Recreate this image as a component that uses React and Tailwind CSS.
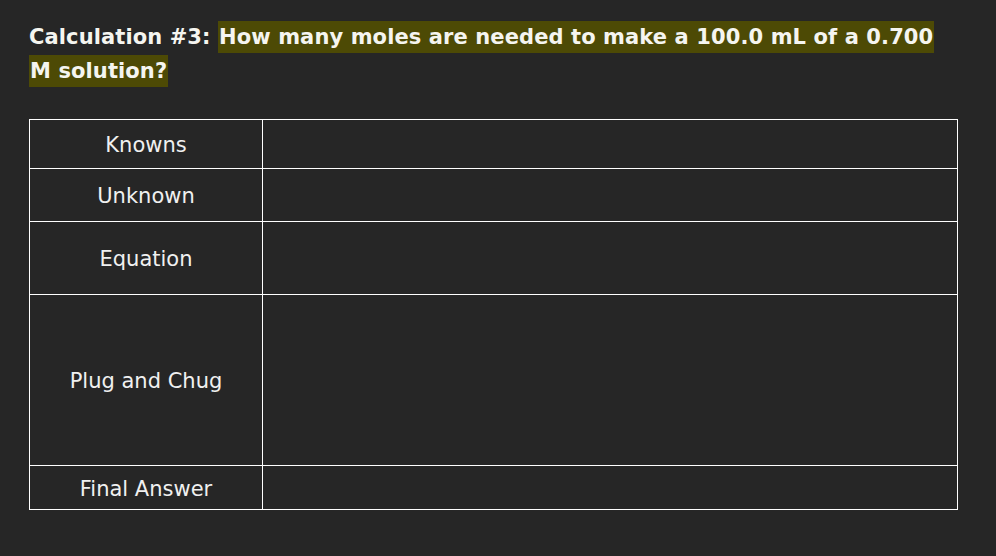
export default function App() {
  const rows = [
    { label: 'Knowns', h: 'h-[49px]' },
    { label: 'Unknown', h: 'h-[53px]' },
    { label: 'Equation', h: 'h-[73px]' },
    { label: 'Plug and Chug', h: 'h-[171px]' },
    { label: 'Final Answer', h: 'h-[44px]' },
  ];

  return (
    <div className="min-h-[556px] w-[996px] bg-[#262626] text-white pt-[20px] pl-[29px]" style={{ fontFamily: '"DejaVu Sans", "Open Sans", sans-serif' }}>
      {/* Heading */}
      <div className="w-[950px] text-[21px] font-bold leading-[34px] tracking-[0.1px] text-[#f5f5f0]">
        Calculation #3:{' '}
        <span className="bg-[#4d4a05] px-[1px] py-[4px] box-decoration-clone">
          How many moles are needed to make a 100.0 mL of a 0.700<br />M solution?
        </span>
      </div>

      {/* Table */}
      <div className="mt-[31px] grid w-[929px] grid-cols-[233px_695px] border-l border-t border-white">
        {rows.map(r => (
          <div key={r.label} className="contents">
            <div className={`${r.h} flex items-center justify-center border-r border-b border-white pt-[4px] text-[21px] text-[#f0f0f0]`}>
              {r.label}
            </div>
            <div className={`${r.h} border-r border-b border-white`} />
          </div>
        ))}
      </div>
    </div>
  );
}
